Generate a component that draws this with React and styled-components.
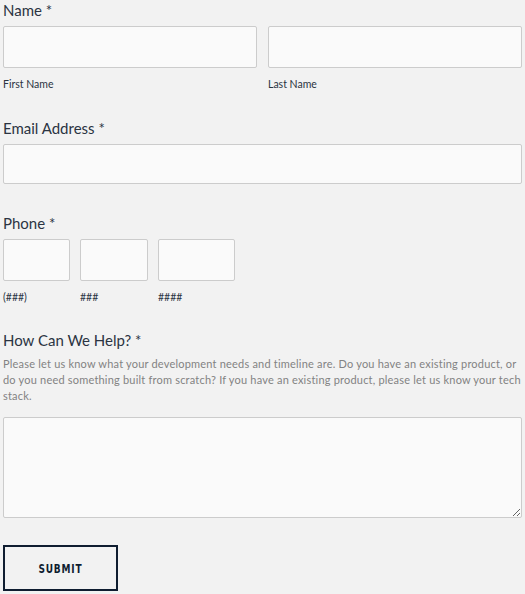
import React from "react";
import styled, { createGlobalStyle } from "styled-components";

const GlobalStyle = createGlobalStyle`
  body {
    margin: 0;
    background: #f2f2f2;
    font-family: Lato, "Liberation Sans", sans-serif;
    color: #2b3442;
  }
`;

const Form = styled.form`
  display: flex;
  flex-direction: column;
  padding: 0 3px 0 3px;
  width: 519px;
`;

const Field = styled.div`
  display: flex;
  flex-direction: column;
  margin-bottom: ${props => props.mb || 0}px;
`;

const Label = styled.div`
  font-size: 15px;
  line-height: 20px;
  color: #2b3442;
  margin-bottom: 6px;
`;

const Hint = styled.p`
  margin: 0 0 13px;
  font-size: 11px;
  line-height: 16px;
  letter-spacing: 0.2px;
  color: #828282;
`;

const Row = styled.div`
  display: flex;
  gap: ${props => props.gap || 11}px;
`;

const Col = styled.div`
  display: flex;
  flex-direction: column;
  width: ${props => props.w || "auto"};
  flex: ${props => (props.w ? "none" : 1)};
`;

const Input = styled.input`
  box-sizing: border-box;
  width: 100%;
  height: ${props => props.h || 42}px;
  background: #fafafa;
  border: 1px solid #cccccc;
  border-radius: 2px;
  margin: 0;
`;

const TextArea = styled.textarea`
  box-sizing: border-box;
  width: 100%;
  height: 101px;
  background: #fafafa;
  border: 1px solid #cccccc;
  border-radius: 2px;
  margin: 0;
  display: block;
`;

const Sub = styled.span`
  font-size: 10.5px;
  line-height: 14px;
  margin-top: 9px;
  color: #2b3442;
`;

const Submit = styled.button`
  width: 115px;
  height: 46px;
  border: 2px solid #0f1d30;
  background: transparent;
  color: #0f1d30;
  padding: 0;
  margin-top: 27px;
  display: flex;
  align-items: center;
  justify-content: center;
`;

const SubmitText = styled.span`
  font-family: "DejaVu Sans Condensed", "DejaVu Sans", sans-serif;
  font-weight: bold;
  font-size: 12.5px;
  letter-spacing: 1px;
  transform: scaleX(0.8);
`;

export default function App() {
  return (
    <>
      <GlobalStyle />
      <Form onSubmit={e => e.preventDefault()}>
        <Field mb={27}>
          <Label>Name *</Label>
          <Row gap={11}>
            <Col>
              <Input />
              <Sub>First Name</Sub>
            </Col>
            <Col>
              <Input />
              <Sub>Last Name</Sub>
            </Col>
          </Row>
        </Field>
        <Field mb={29}>
          <Label>Email Address *</Label>
          <Input h={40} />
        </Field>
        <Field mb={26}>
          <Label>Phone *</Label>
          <Row gap={10}>
            <Col w="67px">
              <Input />
              <Sub>(###)</Sub>
            </Col>
            <Col w="68px">
              <Input />
              <Sub>###</Sub>
            </Col>
            <Col w="77px">
              <Input />
              <Sub>####</Sub>
            </Col>
          </Row>
        </Field>
        <Field>
          <Label>How Can We Help? *</Label>
          <Hint>
            Please let us know what your development needs and timeline are. Do
            you have an existing product, or do you need something built from
            scratch? If you have an existing product, please let us know your
            tech stack.
          </Hint>
          <TextArea />
        </Field>
        <div>
          <Submit type="submit">
            <SubmitText>SUBMIT</SubmitText>
          </Submit>
        </div>
      </Form>
    </>
  );
}
